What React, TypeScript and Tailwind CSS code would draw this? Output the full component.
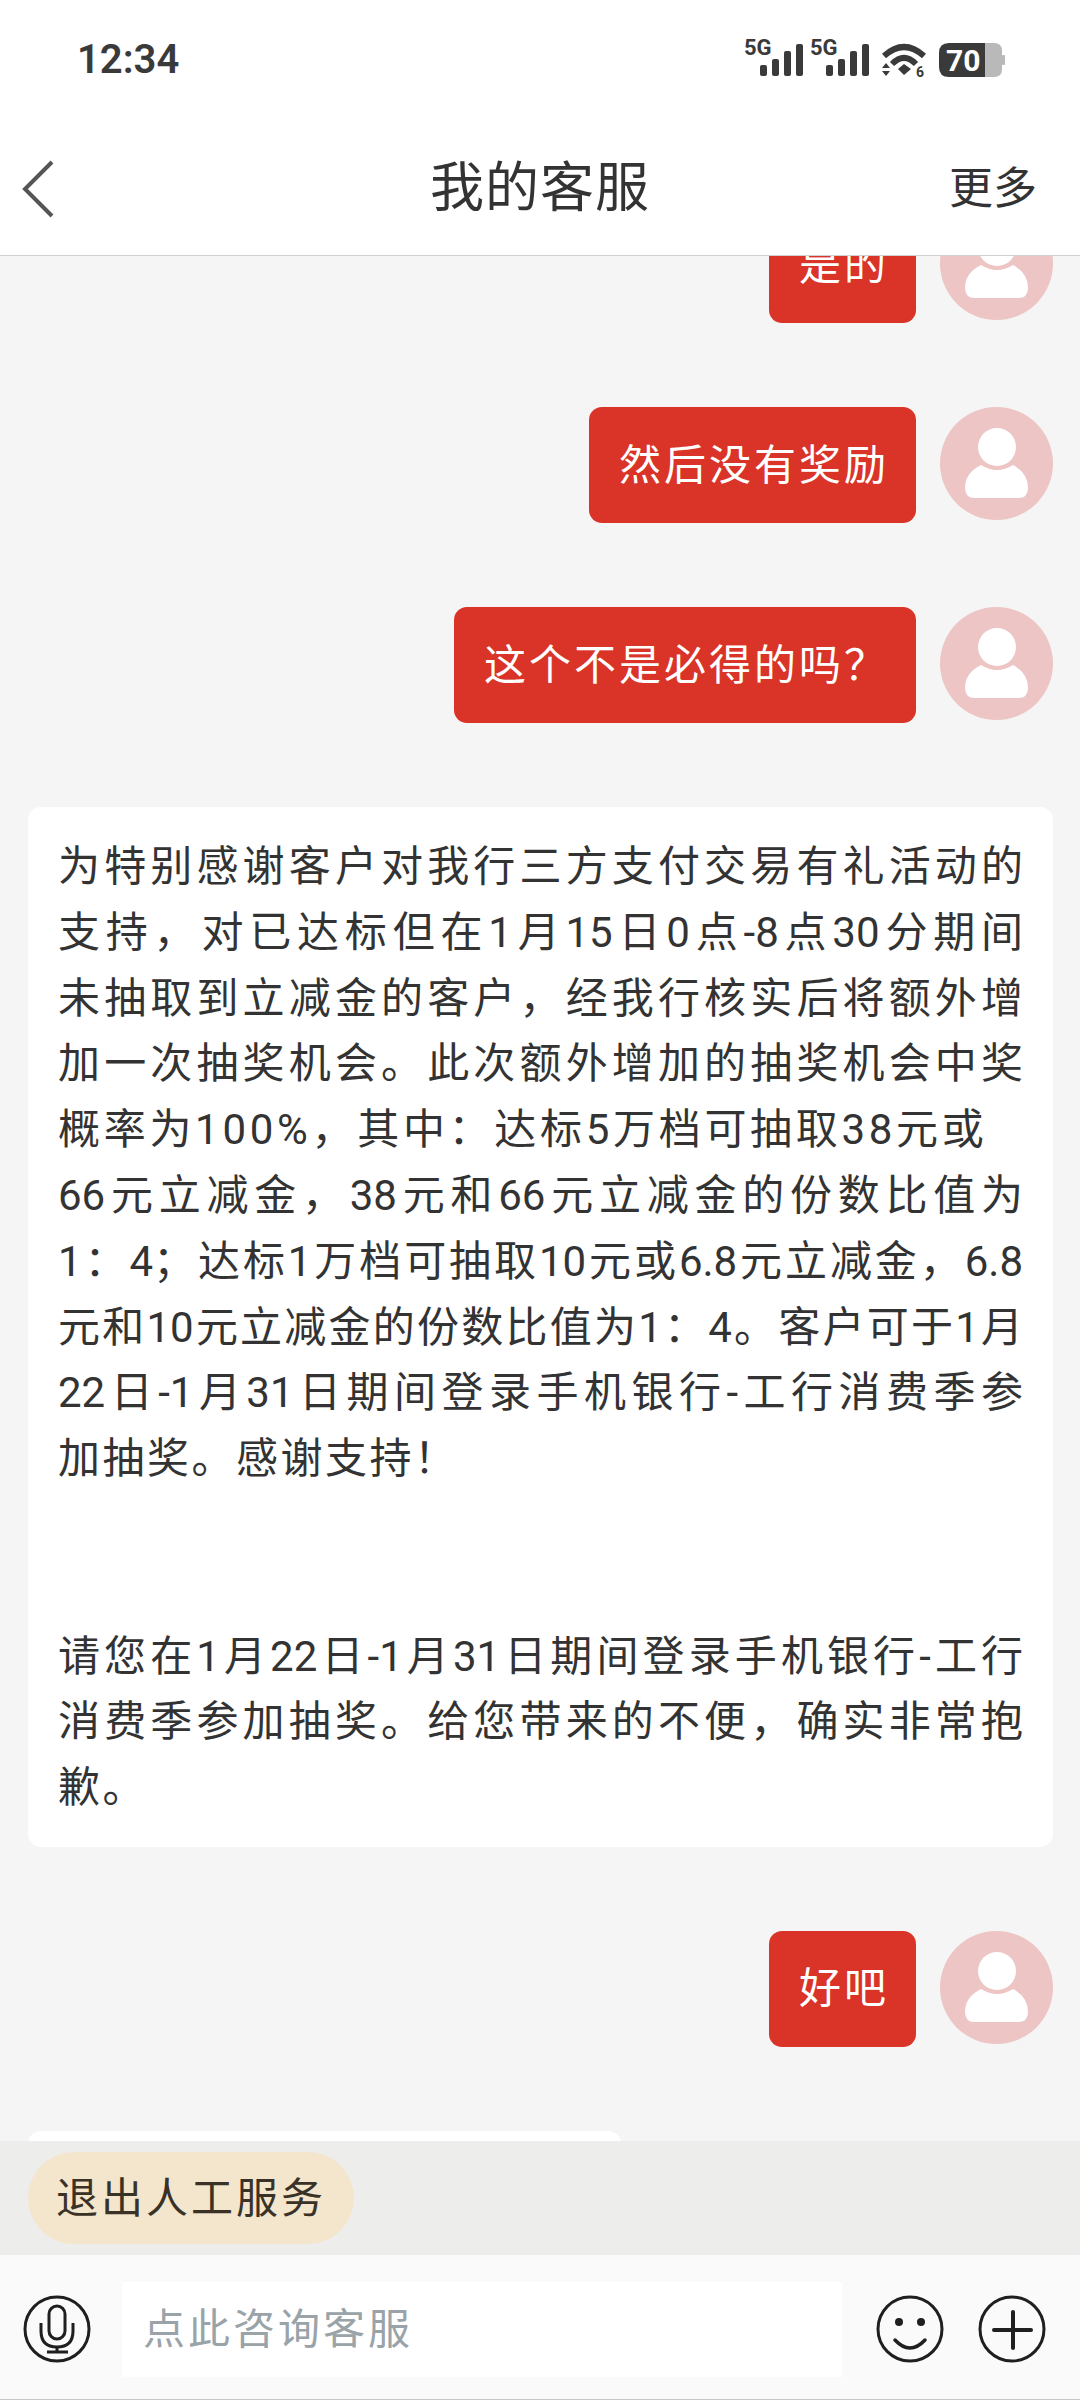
import React from 'react';

const cjk = 'font-["Roboto","Noto_Sans_CJK_SC",sans-serif]';

const fillLine = 'h-[65.8px] whitespace-nowrap text-justify leading-[65.8px] [text-align-last:justify]';
const endLine = 'h-[65.8px] whitespace-nowrap leading-[65.8px] tracking-[2.5px]';

// long lines are justified to the card's width, paragraph ends are not
const cardLines = [
  { text: '为特别感谢客户对我行三方支付交易有礼活动的', style: fillLine },
  { text: '支持，对已达标但在1月15日0点-8点30分期间', style: fillLine },
  { text: '未抽取到立减金的客户，经我行核实后将额外增', style: fillLine },
  { text: '加一次抽奖机会。此次额外增加的抽奖机会中奖', style: fillLine },
  { text: '概率为100%，其中：达标5万档可抽取38元或', style: 'h-[65.8px] whitespace-nowrap leading-[65.8px] tracking-[3.7px]' },
  { text: '66元立减金，38元和66元立减金的份数比值为', style: fillLine },
  { text: '1：4；达标1万档可抽取10元或6.8元立减金，6.8', style: fillLine },
  { text: '元和10元立减金的份数比值为1：4。客户可于1月', style: fillLine },
  { text: '22日-1月31日期间登录手机银行-工行消费季参', style: fillLine },
  { text: '加抽奖。感谢支持！', style: endLine },
  { text: '', style: endLine },
  { text: '', style: endLine },
  { text: '请您在1月22日-1月31日期间登录手机银行-工行', style: fillLine },
  { text: '消费季参加抽奖。给您带来的不便，确实非常抱', style: fillLine },
  { text: '歉。', style: endLine },
];

const Avatar = () => (
  <svg viewBox="0 0 113 113" className="h-[113px] w-[113px] shrink-0">
    <circle cx="56.5" cy="56.5" r="56.5" fill="#ecc5c4" />
    <circle cx="57" cy="40" r="19" fill="#ffffff" />
    <path d="M41 58 Q57 68 73 58 Q88 66 88 81 Q88 91 78 91 H35 Q25 91 25 81 Q25 66 41 58 Z" fill="#ffffff" />
  </svg>
);

const MyMessage = ({ text }: { text: string }) => (
  <div className="flex items-start justify-end gap-[24px]">
    <div className="flex h-[116px] items-center rounded-[13px] bg-[#da3327] pl-[30px] pr-[27px] text-[42px] tracking-[3px] text-white">
      {text}
    </div>
    <Avatar />
  </div>
);

const SignalBars = ({ x }: { x: number }) => (
  <g>
    <text x={x - 1} y="19" fontSize="22" fontWeight="700" fill="#3a3a3a" fontFamily="Roboto, sans-serif">5G</text>
    <rect x={x + 15} y="29" width="7" height="11" rx="2" fill="#3a3a3a" />
    <rect x={x + 27} y="23" width="7" height="17" rx="2" fill="#3a3a3a" />
    <rect x={x + 39} y="15" width="7" height="25" rx="2" fill="#3a3a3a" />
    <rect x={x + 51} y="8" width="7" height="32" rx="2" fill="#3a3a3a" />
  </g>
);

const StatusIcons = () => (
  <svg viewBox="0 0 270 45" className="h-[45px] w-[270px]">
    <SignalBars x={5} />
    <SignalBars x={71} />
    {/* wifi */}
    <path d="M144 20 Q164 2 184 20" fill="none" stroke="#3a3a3a" strokeWidth="6" />
    <path d="M152 28 Q164 16 176 28" fill="none" stroke="#3a3a3a" strokeWidth="6" />
    <path d="M158 33 L164 28 L171 33 L164 39 Z" fill="#3a3a3a" />
    <path d="M142 32 L146 27 L150 32 Z M142 35 L150 35 L146 40 Z" fill="#3a3a3a" />
    <text x="176" y="41" fontSize="14" fontWeight="700" fill="#3a3a3a" fontFamily="Roboto, sans-serif">6</text>
    {/* battery */}
    <path d="M245 7 H254 Q262 7 262 15 V33 Q262 41 254 41 H245 Z" fill="#b9b9b9" />
    <rect x="262" y="19" width="3" height="10" rx="1" fill="#b9b9b9" />
    <path d="M209 7 H245 V41 H209 Q199 41 199 31 V17 Q199 7 209 7 Z" fill="#3a3a3a" />
    <text x="206" y="35" fontSize="30" fontWeight="700" fill="#ffffff" fontFamily="Roboto, sans-serif">70</text>
  </svg>
);

export default function App() {
  return (
    <div className={`flex h-[2400px] w-[1080px] flex-col overflow-hidden bg-[#f5f5f5] ${cjk}`}>
      {/* status bar */}
      <div className="flex h-[116px] shrink-0 items-center justify-between bg-white pl-[77px] pr-[70px]">
        <span className="pt-[4px] text-[40px] font-semibold text-[#3a3a3a]">12:34</span>
        <StatusIcons />
      </div>

      {/* title bar */}
      <div className="grid h-[140px] shrink-0 grid-cols-[1fr_auto_1fr] items-center border-b border-[#d0d0d0] bg-white pt-[6px]">
        <div className="pl-[22px]">
          <svg viewBox="0 0 32 58" className="h-[58px] w-[32px]">
            <path d="M30 2 L3 29 L30 56" fill="none" stroke="#555555" strokeWidth="4" />
          </svg>
        </div>
        <div className="text-[54px] tracking-[1px] text-[#333333]">我的客服</div>
        <div className="pr-[43px] text-right text-[44px] text-[#333333]">更多</div>
      </div>

      {/* chat */}
      <div className="min-h-0 flex-1 overflow-hidden">
        <div className="-mt-[49px] flex flex-col gap-[84px] pl-[28px] pr-[27px]">
          <MyMessage text="是的" />
          <MyMessage text="然后没有奖励" />
          <MyMessage text="这个不是必得的吗？" />
          <div className="rounded-[13px] bg-white px-[30px] pb-[26px] pt-[27px] text-[42px] text-[#333333]">
            {cardLines.map((line, i) => (
              <div key={i} className={line.style}>
                {line.text}
              </div>
            ))}
          </div>
          <MyMessage text="好吧" />
          <div className="h-[100px] w-[593px] rounded-[13px] bg-white" />
        </div>
      </div>

      {/* quick action */}
      <div className="flex h-[114px] shrink-0 items-center bg-[#ededeb] pl-[28px]">
        <div className="flex h-[92px] w-[326px] items-center justify-center rounded-[46px] bg-[#f3e6cd] text-[42px] tracking-[3px] text-[#3a3226]">
          退出人工服务
        </div>
      </div>

      {/* input */}
      <div className="flex h-[145px] shrink-0 items-center border-b border-[#c8c8c8] bg-[#fafafa] pl-[23px] pt-[4px]">
        <svg viewBox="0 0 68 68" className="h-[68px] w-[68px] shrink-0">
          <g fill="none" stroke="#1f1f1f" strokeWidth="3">
            <circle cx="34" cy="34" r="32" />
            <rect x="26" y="11" width="16" height="33" rx="8" />
            <path d="M18 28 V36 Q18 52 34 52 Q50 52 50 36 V28" />
            <path d="M34 52 V57 M24 57 H45" />
          </g>
        </svg>
        <div className="ml-[31px] flex h-[95px] w-[720px] items-center bg-white pl-[21px] text-[42px] tracking-[3px] text-[#99a3a8]">
          点此咨询客服
        </div>
        <svg viewBox="0 0 68 68" className="ml-[34px] h-[68px] w-[68px] shrink-0">
          <circle cx="34" cy="34" r="32" fill="none" stroke="#1f1f1f" strokeWidth="3" />
          <circle cx="23" cy="27" r="4" fill="#1f1f1f" />
          <circle cx="45" cy="27" r="4" fill="#1f1f1f" />
          <path d="M19 45 Q34 61 49 45" fill="none" stroke="#1f1f1f" strokeWidth="3.5" strokeLinecap="round" />
        </svg>
        <svg viewBox="0 0 68 68" className="ml-[34px] h-[68px] w-[68px] shrink-0">
          <circle cx="34" cy="34" r="32" fill="none" stroke="#1f1f1f" strokeWidth="3" />
          <path d="M16 35 H53 M35 17 V53" fill="none" stroke="#1f1f1f" strokeWidth="4" strokeLinecap="round" />
        </svg>
      </div>
    </div>
  );
}
